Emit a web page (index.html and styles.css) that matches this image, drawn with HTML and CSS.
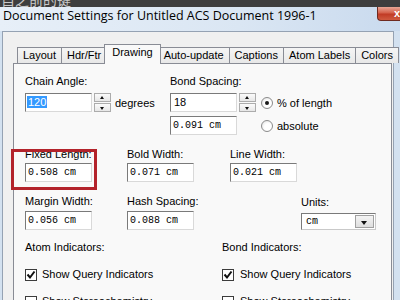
FILE: index.html
```html
<!DOCTYPE html>
<html lang="en">
<head>
    <meta charset="UTF-8">
    <title>Document Settings</title>
    <link rel="stylesheet" href="styles.css">
</head>
<body>
    <div class="backbar"><span>自之前的键</span></div>

    <div class="titlebar">
        <div class="title">Document Settings for Untitled ACS Document 1996-1</div>
        <div class="close-btn">x</div>
    </div>

    <div class="client">
        <div class="tabs">
            <div class="tab">Layout</div>
            <div class="tab">Hdr/Ftr</div>
            <div class="tab active">Drawing</div>
            <div class="tab">Auto-update</div>
            <div class="tab">Captions</div>
            <div class="tab">Atom Labels</div>
            <div class="tab">Colors</div>
        </div>

        <div class="panel">
            <!-- chain angle / bond spacing -->
            <div class="row row-top">
                <div class="group-chain">
                    <div class="field-label">Chain Angle:</div>
                    <div class="line">
                        <div class="input input-sans"><span class="selected">120</span></div>
                        <div class="spinner"><div class="spin up"></div><div class="spin down"></div></div>
                        <span class="unit-text">degrees</span>
                    </div>
                </div>
                <div class="group-bond">
                    <div class="field-label">Bond Spacing:</div>
                    <div class="line">
                        <div class="input input-sans plain">18</div>
                        <div class="spinner"><div class="spin up"></div><div class="spin down"></div></div>
                        <span class="radio checked"></span>
                        <span class="radio-text">% of length</span>
                    </div>
                    <div class="line line-second">
                        <div class="input">0.091 cm</div>
                        <span class="radio no-spin"></span>
                        <span class="radio-text">absolute</span>
                    </div>
                </div>
            </div>

            <div class="row row-mid">
                <div class="col col-a">
                    <div class="field-label">Fixed Length:</div>
                    <div class="input">0.508 cm</div>
                </div>
                <div class="col col-b">
                    <div class="field-label">Bold Width:</div>
                    <div class="input">0.071 cm</div>
                </div>
                <div class="col">
                    <div class="field-label">Line Width:</div>
                    <div class="input">0.021 cm</div>
                </div>
            </div>

            <div class="row row-low">
                <div class="col col-a">
                    <div class="field-label">Margin Width:</div>
                    <div class="input">0.056 cm</div>
                </div>
                <div class="col col-wide">
                    <div class="field-label">Hash Spacing:</div>
                    <div class="input">0.088 cm</div>
                </div>
                <div class="col col-units">
                    <div class="field-label">Units:</div>
                    <div class="select">
                        <span class="select-value">cm</span>
                        <span class="select-btn"></span>
                    </div>
                </div>
            </div>

            <div class="row row-heads">
                <div class="col-half">Atom Indicators:</div>
                <div>Bond Indicators:</div>
            </div>

            <div class="row row-check">
                <div class="col-half check-item">
                    <span class="checkbox"><svg width="10" height="10" viewBox="0 0 10 10"><polyline points="1.5,4.5 4,7.5 8.5,1.5" fill="none" stroke="#111" stroke-width="2"/></svg></span>
                    Show Query Indicators
                </div>
                <div class="check-item offset">
                    <span class="checkbox"><svg width="10" height="10" viewBox="0 0 10 10"><polyline points="1.5,4.5 4,7.5 8.5,1.5" fill="none" stroke="#111" stroke-width="2"/></svg></span>
                    Show Query Indicators
                </div>
            </div>

            <div class="row row-check">
                <div class="col-half check-item">
                    <span class="checkbox"></span>
                    Show Stereochemistry
                </div>
                <div class="check-item offset">
                    <span class="checkbox"></span>
                    Show Stereochemistry
                </div>
            </div>

            <div class="highlight"></div>
        </div>
    </div>
</body>
</html>
```

FILE: styles.css
```css
* {
    box-sizing: border-box;
}

body {
    margin: 0;
    width: 400px;
    height: 300px;
    overflow: hidden;
    background: #d3e1f0;
    font-family: "Liberation Sans", Arial, sans-serif;
    font-size: 11px;
    color: #000;
}

.backbar {
    height: 7px;
    background: #3e3e3e;
    overflow: hidden;
}

.backbar span {
    display: block;
    margin-top: -8px;
    padding-left: 1px;
    font-family: "Noto Sans CJK SC", sans-serif;
    font-size: 14px;
    line-height: 14px;
    color: #c8c8c8;
}

.titlebar {
    height: 24px;
    display: flex;
    align-items: flex-start;
    background: linear-gradient(to right, #e7eff8 0%, #dae6f3 60%, #c9daee 100%);
}

.title {
    padding: 1px 0 0 3px;
    font-family: "Open Sans", "Liberation Sans", sans-serif;
    font-size: 12.5px;
    line-height: 16px;
    color: #000;
}

.close-btn {
    margin-left: auto;
    width: 23px;
    height: 14px;
    padding-left: 16px;
    background: linear-gradient(#e9a796 0%, #d4604a 45%, #c13b25 55%, #cf5a3f 100%);
    border: 1px solid #6e2a20;
    border-top: none;
    border-right: none;
    border-bottom-left-radius: 4px;
    color: #fff;
    font-weight: bold;
    font-size: 11px;
    line-height: 12px;
}

.client {
    margin: 0 6px 0 2px;
    height: 276px;
    background: #f0f0f0;
    border: 1px solid #95a2b3;
    border-bottom: none;
}

.tabs {
    display: flex;
    align-items: flex-end;
    height: 31px;
    padding: 12px 0 0 14px;
}

.tab {
    height: 16px;
    padding: 0 5px;
    line-height: 15px;
    border: 1px solid #898c95;
    border-bottom: none;
    background: linear-gradient(#f5f5f5, #e8e8e8);
    white-space: nowrap;
}

.tab + .tab {
    margin-left: -1px;
}

.tab.active {
    position: relative;
    z-index: 1;
    height: 20px;
    margin: 0 -2px -1px -3px;
    padding: 0 7px;
    line-height: 15px;
    background: #f9f9f9;
}

.panel {
    position: relative;
    height: 245px;
    margin: 0 1px 0 10px;
    padding: 11px 0 0 11px;
    background: #f9f9f9;
    border: 1px solid #898c95;
}

.row {
    display: flex;
}

.field-label {
    height: 13px;
    line-height: 13px;
    white-space: nowrap;
}

.line {
    display: flex;
    align-items: center;
}

.row-top .field-label {
    margin-bottom: 5px;
}

.group-chain {
    width: 145px;
}

.line-second {
    margin-top: 4px;
}

.input {
    width: 67px;
    height: 19px;
    padding-left: 2px;
    background: #fff;
    border: 1px solid;
    border-color: #7a7a7a #d9d9d9 #d9d9d9 #7a7a7a;
    font-family: "Liberation Mono", monospace;
    font-size: 10px;
    line-height: 17px;
    white-space: pre;
}

.input-sans {
    padding-left: 1px;
    font-family: "Liberation Sans", Arial, sans-serif;
    font-size: 11px;
}

.input-sans.plain {
    padding-left: 3px;
}

.selected {
    display: inline-block;
    padding: 0 1px;
    line-height: 12px;
    background: #3399ff;
    color: #fff;
}

.spinner {
    width: 17px;
    height: 19px;
    margin-left: 2px;
    display: flex;
    flex-direction: column;
    gap: 1px;
}

.spin {
    position: relative;
    flex: 1;
    border: 1px solid #acacac;
    background: linear-gradient(#fbfbfb, #e7e7e7);
}

.spin::after {
    content: "";
    position: absolute;
    left: 5px;
    top: 2px;
    border-left: 2.5px solid transparent;
    border-right: 2.5px solid transparent;
}

.spin.up::after {
    border-bottom: 3px solid #111;
}

.spin.down::after {
    top: 3px;
    border-top: 3px solid #111;
}

.unit-text {
    margin-left: 4px;
}

.radio {
    position: relative;
    width: 12px;
    height: 12px;
    margin-left: 5px;
    border-radius: 50%;
    border: 1px solid #8b8b8b;
    background: radial-gradient(circle at 60% 60%, #fff 40%, #dcdcdc 100%);
}

.radio.no-spin {
    margin-left: 24px;
}

.radio.checked::after {
    content: "";
    position: absolute;
    left: 3px;
    top: 3px;
    width: 4px;
    height: 4px;
    border-radius: 50%;
    background: #1a1a1a;
}

.radio-text {
    margin-left: 4px;
}

.row-mid {
    margin-top: 13px;
}

.row-mid .field-label {
    margin-bottom: 2px;
}

.row-low {
    margin-top: 13px;
}

.row-low .field-label {
    margin-bottom: 3px;
}

.col-a {
    width: 102px;
}

.col-b {
    width: 103px;
}

.col-wide {
    width: 174px;
}

.col-units {
    padding-top: 1px;
}

.col-units .field-label {
    margin-bottom: 4px;
}

.select {
    display: flex;
    width: 75px;
    height: 17px;
    background: #fff;
    border: 1px solid #7a7a7a;
    border-right-color: #c9c9c9;
    border-bottom-color: #c9c9c9;
}

.select-value {
    flex: 1;
    padding-left: 4px;
    font-family: "Liberation Mono", monospace;
    font-size: 10px;
    line-height: 15px;
}

.select-btn {
    position: relative;
    width: 19px;
    margin: 1px;
    background: linear-gradient(#f4f4f4, #dedede);
    border: 1px solid #a0a0a0;
}

.select-btn::after {
    content: "";
    position: absolute;
    left: 5px;
    top: 5px;
    border-left: 3.5px solid transparent;
    border-right: 3.5px solid transparent;
    border-top: 4px solid #111;
}

.row-heads {
    margin-top: 11px;
    line-height: 13px;
}

.col-half {
    width: 197px;
}

.row-check {
    margin-top: 14px;
    line-height: 13px;
}

.check-item {
    display: flex;
    align-items: center;
    white-space: nowrap;
}

.checkbox {
    width: 12px;
    height: 12px;
    margin-right: 5px;
    display: flex;
    align-items: center;
    justify-content: center;
    background: #fff;
    border: 1px solid #3c3c3c;
}

.check-item.offset .checkbox {
    margin-right: 6px;
}

.highlight {
    position: absolute;
    left: -3px;
    top: 85px;
    width: 86px;
    height: 41px;
    border: 3px solid #b3232b;
}
```
